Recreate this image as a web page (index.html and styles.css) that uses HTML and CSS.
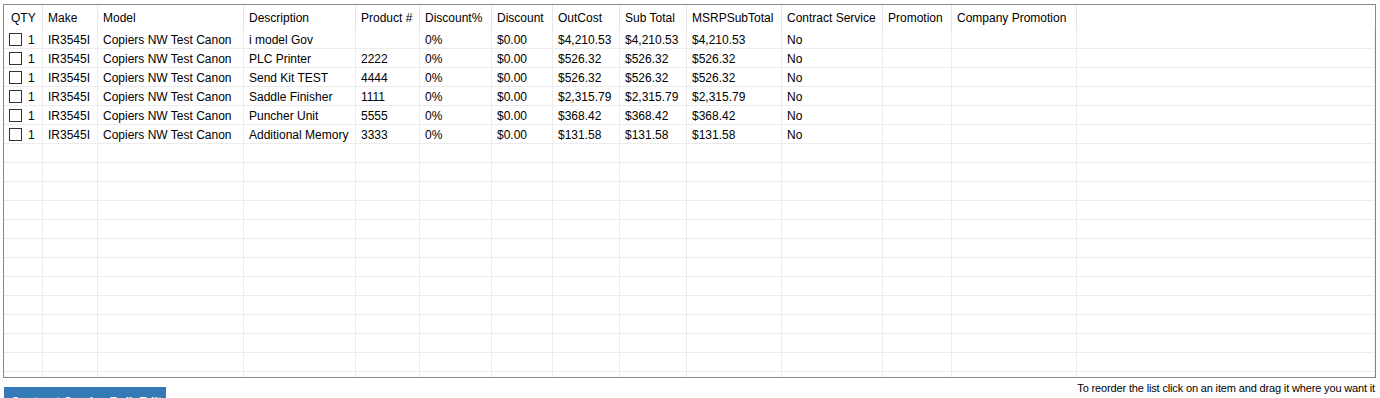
FILE: index.html
```html
<!DOCTYPE html>
<html>
<head>
<meta charset="utf-8">
<link rel="stylesheet" href="styles.css">
</head>
<body>
<div class="grid">
  <div class="row head">
    <div class="c qty-h">QTY</div>
    <div class="c">Make</div>
    <div class="c">Model</div>
    <div class="c">Description</div>
    <div class="c">Product #</div>
    <div class="c">Discount%</div>
    <div class="c">Discount</div>
    <div class="c">OutCost</div>
    <div class="c">Sub Total</div>
    <div class="c">MSRPSubTotal</div>
    <div class="c">Contract Service</div>
    <div class="c">Promotion</div>
    <div class="c">Company Promotion</div>
    <div class="c fill"></div>
  </div>
  <div class="body">
    <div class="row">
      <div class="c"><span class="cb"></span>1</div><div class="c">IR3545I</div><div class="c">Copiers NW Test Canon</div><div class="c">i model Gov</div><div class="c"></div><div class="c">0%</div><div class="c">$0.00</div><div class="c">$4,210.53</div><div class="c">$4,210.53</div><div class="c">$4,210.53</div><div class="c">No</div><div class="c"></div><div class="c"></div><div class="c fill"></div>
    </div>
    <div class="row">
      <div class="c"><span class="cb"></span>1</div><div class="c">IR3545I</div><div class="c">Copiers NW Test Canon</div><div class="c">PLC Printer</div><div class="c">2222</div><div class="c">0%</div><div class="c">$0.00</div><div class="c">$526.32</div><div class="c">$526.32</div><div class="c">$526.32</div><div class="c">No</div><div class="c"></div><div class="c"></div><div class="c fill"></div>
    </div>
    <div class="row">
      <div class="c"><span class="cb"></span>1</div><div class="c">IR3545I</div><div class="c">Copiers NW Test Canon</div><div class="c">Send Kit TEST</div><div class="c">4444</div><div class="c">0%</div><div class="c">$0.00</div><div class="c">$526.32</div><div class="c">$526.32</div><div class="c">$526.32</div><div class="c">No</div><div class="c"></div><div class="c"></div><div class="c fill"></div>
    </div>
    <div class="row">
      <div class="c"><span class="cb"></span>1</div><div class="c">IR3545I</div><div class="c">Copiers NW Test Canon</div><div class="c">Saddle Finisher</div><div class="c">1111</div><div class="c">0%</div><div class="c">$0.00</div><div class="c">$2,315.79</div><div class="c">$2,315.79</div><div class="c">$2,315.79</div><div class="c">No</div><div class="c"></div><div class="c"></div><div class="c fill"></div>
    </div>
    <div class="row">
      <div class="c"><span class="cb"></span>1</div><div class="c">IR3545I</div><div class="c">Copiers NW Test Canon</div><div class="c">Puncher Unit</div><div class="c">5555</div><div class="c">0%</div><div class="c">$0.00</div><div class="c">$368.42</div><div class="c">$368.42</div><div class="c">$368.42</div><div class="c">No</div><div class="c"></div><div class="c"></div><div class="c fill"></div>
    </div>
    <div class="row">
      <div class="c"><span class="cb"></span>1</div><div class="c">IR3545I</div><div class="c">Copiers NW Test Canon</div><div class="c">Additional Memory</div><div class="c">3333</div><div class="c">0%</div><div class="c">$0.00</div><div class="c">$131.58</div><div class="c">$131.58</div><div class="c">$131.58</div><div class="c">No</div><div class="c"></div><div class="c"></div><div class="c fill"></div>
    </div>
    <div class="row"><div class="c"></div><div class="c"></div><div class="c"></div><div class="c"></div><div class="c"></div><div class="c"></div><div class="c"></div><div class="c"></div><div class="c"></div><div class="c"></div><div class="c"></div><div class="c"></div><div class="c"></div><div class="c fill"></div></div>
    <div class="row"><div class="c"></div><div class="c"></div><div class="c"></div><div class="c"></div><div class="c"></div><div class="c"></div><div class="c"></div><div class="c"></div><div class="c"></div><div class="c"></div><div class="c"></div><div class="c"></div><div class="c"></div><div class="c fill"></div></div>
    <div class="row"><div class="c"></div><div class="c"></div><div class="c"></div><div class="c"></div><div class="c"></div><div class="c"></div><div class="c"></div><div class="c"></div><div class="c"></div><div class="c"></div><div class="c"></div><div class="c"></div><div class="c"></div><div class="c fill"></div></div>
    <div class="row"><div class="c"></div><div class="c"></div><div class="c"></div><div class="c"></div><div class="c"></div><div class="c"></div><div class="c"></div><div class="c"></div><div class="c"></div><div class="c"></div><div class="c"></div><div class="c"></div><div class="c"></div><div class="c fill"></div></div>
    <div class="row"><div class="c"></div><div class="c"></div><div class="c"></div><div class="c"></div><div class="c"></div><div class="c"></div><div class="c"></div><div class="c"></div><div class="c"></div><div class="c"></div><div class="c"></div><div class="c"></div><div class="c"></div><div class="c fill"></div></div>
    <div class="row"><div class="c"></div><div class="c"></div><div class="c"></div><div class="c"></div><div class="c"></div><div class="c"></div><div class="c"></div><div class="c"></div><div class="c"></div><div class="c"></div><div class="c"></div><div class="c"></div><div class="c"></div><div class="c fill"></div></div>
    <div class="row"><div class="c"></div><div class="c"></div><div class="c"></div><div class="c"></div><div class="c"></div><div class="c"></div><div class="c"></div><div class="c"></div><div class="c"></div><div class="c"></div><div class="c"></div><div class="c"></div><div class="c"></div><div class="c fill"></div></div>
    <div class="row"><div class="c"></div><div class="c"></div><div class="c"></div><div class="c"></div><div class="c"></div><div class="c"></div><div class="c"></div><div class="c"></div><div class="c"></div><div class="c"></div><div class="c"></div><div class="c"></div><div class="c"></div><div class="c fill"></div></div>
    <div class="row"><div class="c"></div><div class="c"></div><div class="c"></div><div class="c"></div><div class="c"></div><div class="c"></div><div class="c"></div><div class="c"></div><div class="c"></div><div class="c"></div><div class="c"></div><div class="c"></div><div class="c"></div><div class="c fill"></div></div>
    <div class="row"><div class="c"></div><div class="c"></div><div class="c"></div><div class="c"></div><div class="c"></div><div class="c"></div><div class="c"></div><div class="c"></div><div class="c"></div><div class="c"></div><div class="c"></div><div class="c"></div><div class="c"></div><div class="c fill"></div></div>
    <div class="row"><div class="c"></div><div class="c"></div><div class="c"></div><div class="c"></div><div class="c"></div><div class="c"></div><div class="c"></div><div class="c"></div><div class="c"></div><div class="c"></div><div class="c"></div><div class="c"></div><div class="c"></div><div class="c fill"></div></div>
    <div class="row"><div class="c"></div><div class="c"></div><div class="c"></div><div class="c"></div><div class="c"></div><div class="c"></div><div class="c"></div><div class="c"></div><div class="c"></div><div class="c"></div><div class="c"></div><div class="c"></div><div class="c"></div><div class="c fill"></div></div>
    <div class="row"><div class="c"></div><div class="c"></div><div class="c"></div><div class="c"></div><div class="c"></div><div class="c"></div><div class="c"></div><div class="c"></div><div class="c"></div><div class="c"></div><div class="c"></div><div class="c"></div><div class="c"></div><div class="c fill"></div></div>
  </div>
</div>
<div class="footer">
  <button class="bulk">Contract Service Bulk Edit</button>
  <div class="hint">To reorder the list click on an item and drag it where you want it</div>
</div>
</body>
</html>
```

FILE: styles.css
```css
* { box-sizing: border-box; }
html, body { margin: 0; padding: 0; background: #fff; }
body {
  font-family: "Liberation Sans", Arial, sans-serif;
  font-size: 12px;
  color: #000;
  width: 1380px;
  height: 398px;
  overflow: hidden;
}
.grid {
  margin: 4px 0 0 3px;
  width: 1373px;
  height: 374px;
  border: 1px solid #828790;
  overflow: hidden;
  background: #fff;
}
.row {
  display: grid;
  grid-template-columns: 39px 55px 146px 112px 64px 72px 61px 67px 67px 95px 101px 69px 125px 1fr;
}
.head .c {
  height: 25px;
  line-height: 24px;
  padding: 1px 5px 0;
  border-right: 1px solid #e6e6e6;
  white-space: nowrap;
}
.head .c.qty-h { padding-left: 7px; }
.head .c.fill { border-right: none; }
.body .c {
  height: 19px;
  line-height: 16px;
  border-right: 1px solid #ececec;
  border-bottom: 1px solid #ececec;
  padding: 2px 5px 0;
  white-space: nowrap;
  display: flex;
  align-items: center;
}
.cb {
  display: inline-block;
  width: 13px;
  height: 13px;
  border: 1px solid #333;
  background: #fff;
  margin: -2px 6px 0 0;
}
.footer {
  display: flex;
  justify-content: space-between;
  align-items: flex-start;
  padding: 0 5px 0 4px;
}
.bulk {
  margin-top: 9px;
  width: 162px;
  height: 30px;
  padding: 5px 7px;
  background: #337ab7;
  border: none;
  color: #fff;
  font-family: "Liberation Sans", Arial, sans-serif;
  font-weight: bold;
  font-size: 12px;
  line-height: 14px;
  text-align: left;
  white-space: nowrap;
}
.hint {
  margin-top: 4px;
  font-size: 11px;
  line-height: 13px;
  letter-spacing: -0.15px;
  white-space: nowrap;
}
```
